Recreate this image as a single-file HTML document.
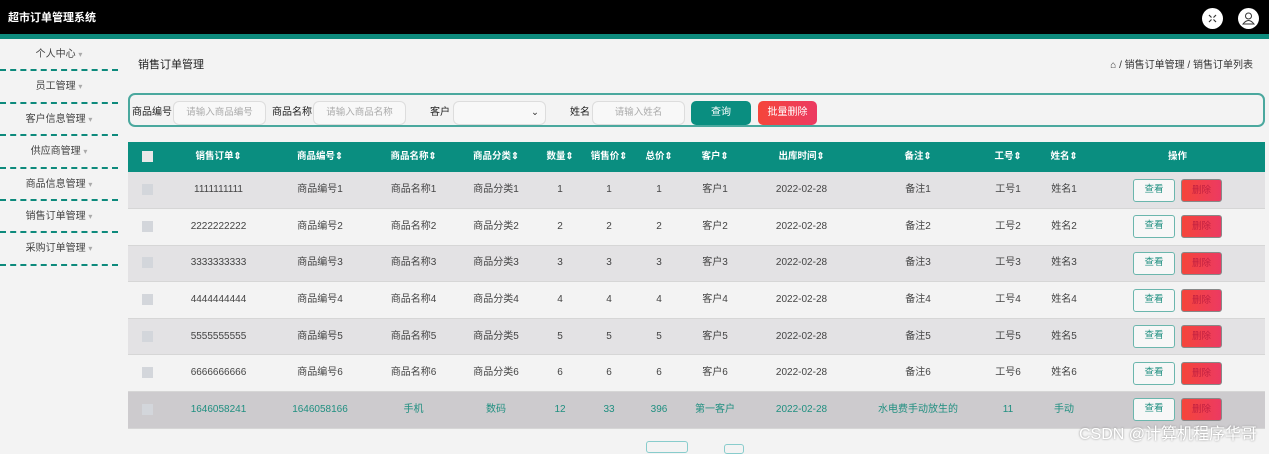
<!DOCTYPE html>
<html><head><meta charset="utf-8"><style>
*{margin:0;padding:0;box-sizing:border-box}
body{width:1269px;height:451px;overflow:hidden;background:#f3f3f3;font-family:"Liberation Sans","Noto Sans CJK SC",sans-serif;font-size:10px;color:#333;position:relative}
.hd{position:absolute;left:0;top:0;width:1269px;height:34px;background:#000;color:#fff;font-size:11px;font-weight:bold;line-height:36px;padding-left:8px}
.band{position:absolute;left:0;top:34px;width:1269px;height:5px;background:#0d8a7c}
.ic{position:absolute;top:8px;width:21px;height:21px;border-radius:50%;background:#fff}
.side{position:absolute;left:0;top:39px;width:118px}
.si{height:32.4px;border-bottom:2px dashed #0d8a7c;text-align:center;line-height:32px;font-size:10px;color:#444}
.si span{color:#aaa;font-size:8px}
.title{position:absolute;left:138px;top:56px;font-size:11px;color:#222}
.bc{position:absolute;right:16px;top:56px;font-size:10px;color:#333}
.sb{position:absolute;left:128px;top:93px;width:1137px;height:34px;border:2px solid #4aa89e;border-radius:7px}
.lb{position:absolute;top:6px;line-height:24px;font-size:10px;color:#222}
.in{position:absolute;top:6px;height:24px;border:1px solid #ddd;border-radius:6px;background:#f8f8f8;color:#aaa;font-size:9.5px;text-align:center;line-height:22px}
.bt{position:absolute;top:6px;height:24px;border-radius:5px;color:#fff;text-align:center;line-height:24px;font-size:10px}
table{position:absolute;left:128px;top:142px;width:1137px;border-collapse:collapse;table-layout:fixed}
th{background:#0a8e80;color:#fff;height:30px;font-size:9.5px;font-weight:bold;vertical-align:middle;line-height:14px}
td{height:36.6px;text-align:center;font-size:10px;color:#444;border-bottom:1px solid #d6d6d6;vertical-align:middle;line-height:14px}
tr.o td{background:#e3e2e4}
tr.e td{background:#f3f3f3}
tr.h td{background:#cdcbce;color:#1f8f80}
.cb{display:inline-block;width:11px;height:11px;background:#d3d6db;vertical-align:middle}
th .cb{background:#e8e8e8}
.v{display:inline-block;width:42px;height:23px;border:1.5px solid #6bb6ad;border-radius:3px;background:#f7f7f7;color:#1f8f80;line-height:20px;font-size:9.5px;margin-right:6px;vertical-align:middle}
.d{display:inline-block;width:41px;height:23px;border-radius:3px;background:linear-gradient(90deg,#f5453a,#ec3a62);color:#c02040;line-height:21px;font-size:9.5px;border:1px solid #888;vertical-align:middle}
.wm{position:absolute;right:12px;top:420px;font-size:16px;color:#fff;text-shadow:0 0 2px #888}
</style></head><body>
<div class="hd">超市订单管理系统</div>
<div class="band"></div>
<div class="ic" style="left:1202px"><svg width="21" height="21"><path d="M7 7l2.5 2.5M14 7l-2.5 2.5M7 14l2.5-2.5M14 14l-2.5-2.5" stroke="#333" stroke-width="1.2"/></svg></div>
<div class="ic" style="left:1238px"><svg width="21" height="21"><circle cx="10.5" cy="8" r="3" fill="none" stroke="#333"/><path d="M5 16q5.5-7 11 0z" fill="none" stroke="#333"/></svg></div>
<div class="side">
<div class="si">个人中心 <span>▾</span></div><div class="si">员工管理 <span>▾</span></div><div class="si">客户信息管理 <span>▾</span></div><div class="si">供应商管理 <span>▾</span></div><div class="si">商品信息管理 <span>▾</span></div><div class="si">销售订单管理 <span>▾</span></div><div class="si">采购订单管理 <span>▾</span></div>
</div>
<div class="title">销售订单管理</div>
<div class="bc">⌂ / 销售订单管理 / 销售订单列表</div>
<div class="sb">
<span class="lb" style="left:2px">商品编号</span><div class="in" style="left:43px;width:93px">请输入商品编号</div>
<span class="lb" style="left:142px">商品名称</span><div class="in" style="left:183px;width:93px">请输入商品名称</div>
<span class="lb" style="left:300px">客户</span><div class="in" style="left:323px;width:93px;text-align:right;padding-right:6px;color:#333">⌄</div>
<span class="lb" style="left:440px">姓名</span><div class="in" style="left:462px;width:93px">请输入姓名</div>
<div class="bt" style="left:561px;width:60px;background:#0a8e80">查询</div>
<div class="bt" style="left:628px;width:59px;background:linear-gradient(90deg,#f5453a,#ec3a62)">批量删除</div>
</div>
<table>
<colgroup><col style="width:39px"><col style="width:103px"><col style="width:100px"><col style="width:87px"><col style="width:78px"><col style="width:50px"><col style="width:48px"><col style="width:52px"><col style="width:60px"><col style="width:113px"><col style="width:120px"><col style="width:60px"><col style="width:52px"><col style="width:175px"></colgroup>
<tr><th><span class="cb"></span></th><th>销售订单⇕</th><th>商品编号⇕</th><th>商品名称⇕</th><th>商品分类⇕</th><th>数量⇕</th><th>销售价⇕</th><th>总价⇕</th><th>客户⇕</th><th>出库时间⇕</th><th>备注⇕</th><th>工号⇕</th><th>姓名⇕</th><th>操作</th></tr>
<tr class="o"><td><span class="cb"></span></td><td>1111111111</td><td>商品编号1</td><td>商品名称1</td><td>商品分类1</td><td>1</td><td>1</td><td>1</td><td>客户1</td><td>2022-02-28</td><td>备注1</td><td>工号1</td><td>姓名1</td><td><span class="v">查看</span><span class="d">删除</span></td></tr>
<tr class="e"><td><span class="cb"></span></td><td>2222222222</td><td>商品编号2</td><td>商品名称2</td><td>商品分类2</td><td>2</td><td>2</td><td>2</td><td>客户2</td><td>2022-02-28</td><td>备注2</td><td>工号2</td><td>姓名2</td><td><span class="v">查看</span><span class="d">删除</span></td></tr>
<tr class="o"><td><span class="cb"></span></td><td>3333333333</td><td>商品编号3</td><td>商品名称3</td><td>商品分类3</td><td>3</td><td>3</td><td>3</td><td>客户3</td><td>2022-02-28</td><td>备注3</td><td>工号3</td><td>姓名3</td><td><span class="v">查看</span><span class="d">删除</span></td></tr>
<tr class="e"><td><span class="cb"></span></td><td>4444444444</td><td>商品编号4</td><td>商品名称4</td><td>商品分类4</td><td>4</td><td>4</td><td>4</td><td>客户4</td><td>2022-02-28</td><td>备注4</td><td>工号4</td><td>姓名4</td><td><span class="v">查看</span><span class="d">删除</span></td></tr>
<tr class="o"><td><span class="cb"></span></td><td>5555555555</td><td>商品编号5</td><td>商品名称5</td><td>商品分类5</td><td>5</td><td>5</td><td>5</td><td>客户5</td><td>2022-02-28</td><td>备注5</td><td>工号5</td><td>姓名5</td><td><span class="v">查看</span><span class="d">删除</span></td></tr>
<tr class="e"><td><span class="cb"></span></td><td>6666666666</td><td>商品编号6</td><td>商品名称6</td><td>商品分类6</td><td>6</td><td>6</td><td>6</td><td>客户6</td><td>2022-02-28</td><td>备注6</td><td>工号6</td><td>姓名6</td><td><span class="v">查看</span><span class="d">删除</span></td></tr>
<tr class="h"><td><span class="cb"></span></td><td>1646058241</td><td>1646058166</td><td>手机</td><td>数码</td><td>12</td><td>33</td><td>396</td><td>第一客户</td><td>2022-02-28</td><td>水电费手动放生的</td><td>11</td><td>手动</td><td><span class="v">查看</span><span class="d">删除</span></td></tr>
</table>
<div style="position:absolute;left:646px;top:441px;width:42px;height:12px;border:1.5px solid #8cc;border-radius:3px"></div>
<div style="position:absolute;left:724px;top:444px;width:20px;height:10px;border:1.5px solid #8cc;border-radius:3px"></div>
<div class="wm">CSDN @计算机程序华哥</div>
</body></html>
